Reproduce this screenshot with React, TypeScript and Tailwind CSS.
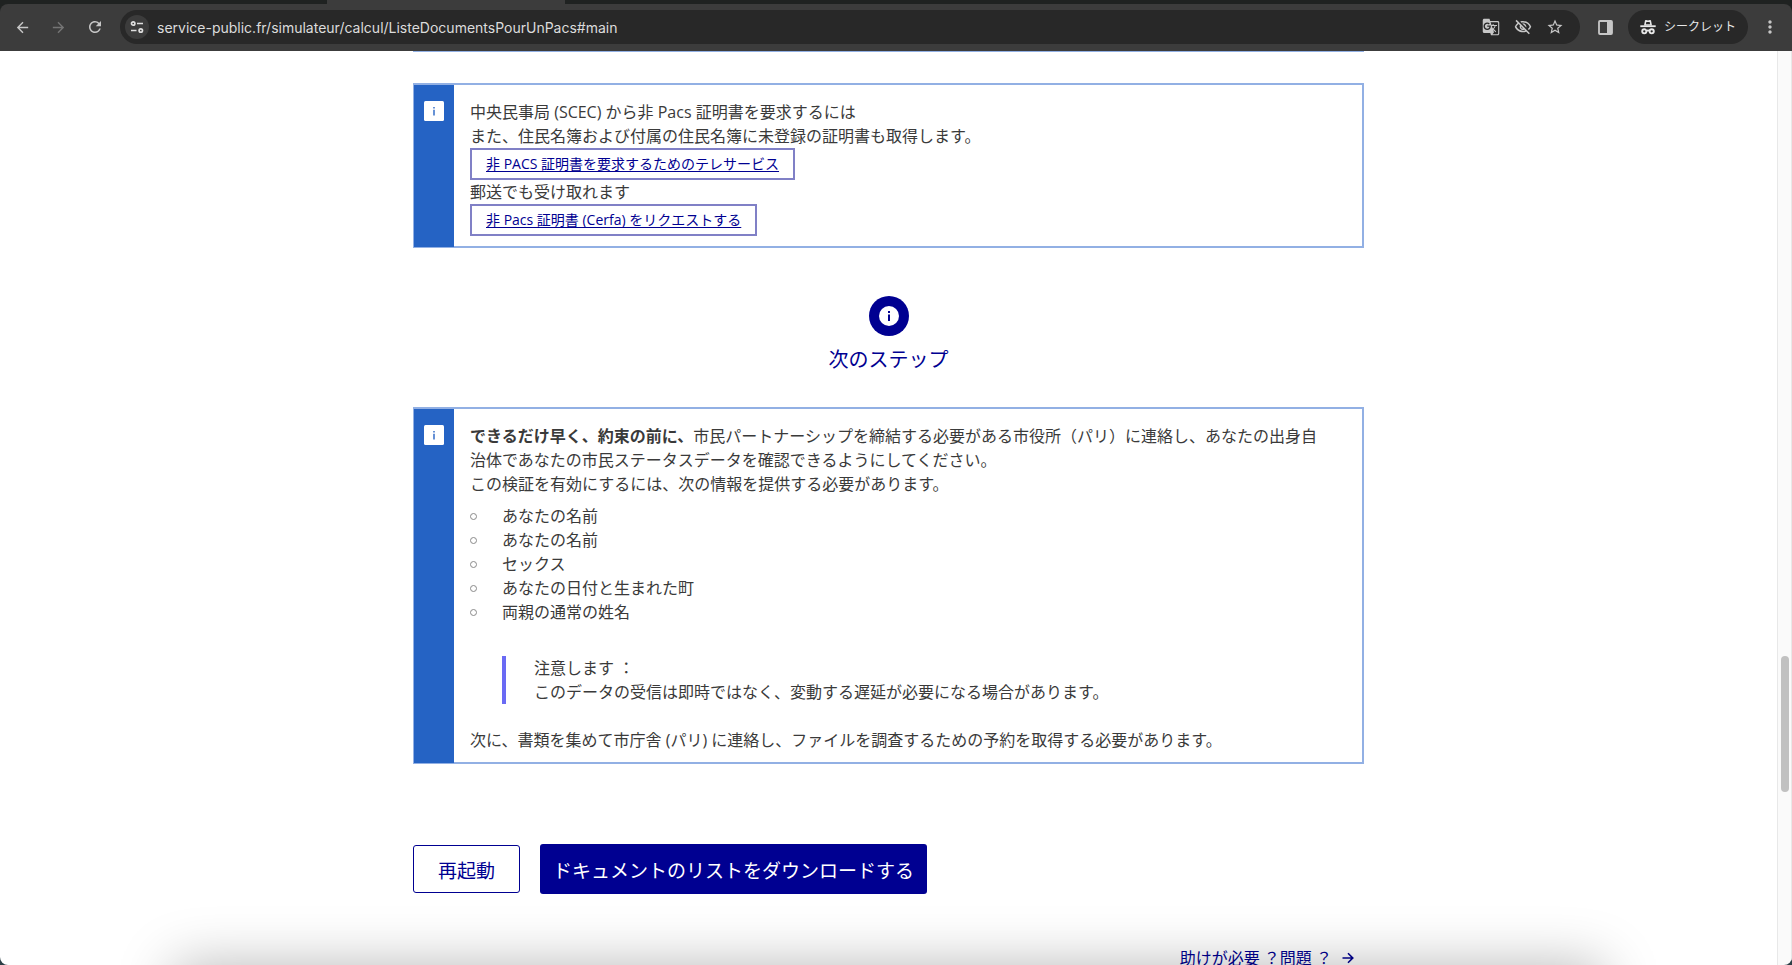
import type { ReactNode } from 'react';
import {
  MdArrowBack,
  MdArrowForward,
  MdRefresh,
  MdGTranslate,
  MdOutlineVisibilityOff,
  MdStarOutline,
  MdMoreVert,
} from 'react-icons/md';

function TuneIcon() {
  return (
    <svg width="14" height="14" viewBox="0 0 14 14" fill="none" stroke="#dedede" strokeWidth="1.7">
      <circle cx="3.2" cy="3.5" r="1.7" />
      <path d="M7 3.5h6M1 10.5h5.5" />
      <circle cx="10.8" cy="10.5" r="1.7" />
    </svg>
  );
}

function PanelIcon() {
  return (
    <svg width="15" height="15" viewBox="0 0 15 15">
      <rect x="1" y="1" width="13" height="13" rx="1" fill="none" stroke="#c7c7c7" strokeWidth="1.8" />
      <rect x="9" y="1" width="5" height="13" fill="#c7c7c7" />
    </svg>
  );
}

function IncognitoIcon() {
  return (
    <svg width="16" height="16" viewBox="0 0 16 16" fill="none" stroke="#e8e8e8">
      <path d="M4 6.5 5 1.6c.1-.6.6-.8 1.1-.6L8 1.5l1.9-.5c.5-.2 1 0 1.1.6L12 6.5z" fill="#e8e8e8" stroke="none" />
      <path d="M6.3 3h3.4l.4 2.3H5.9z" fill="#282828" stroke="none" />
      <path d="M.3 7.2h15.4" strokeWidth="1.8" />
      <circle cx="4.3" cy="12.3" r="2.1" strokeWidth="1.9" />
      <circle cx="11.7" cy="12.3" r="2.1" strokeWidth="1.9" />
      <path d="M6.4 12c1-.7 2.2-.7 3.2 0" strokeWidth="1.6" />
    </svg>
  );
}

function BrowserBar() {
  return (
    <header className="shrink-0 bg-[#1f2221]">
      <div className="flex h-1">
        <div className="w-[327px] rounded-br-md bg-[#1f2221]" />
        <div className="w-[238px] bg-[#3c3c3c]" />
      </div>
      <div className="flex h-[47px] items-center rounded-t-lg bg-[#3c3c3c] pr-3 pb-px pl-3.5">
        <button aria-label="戻る" className="w-9 text-[#c7c7c7]"><MdArrowBack size={17} /></button>
        <button aria-label="進む" className="w-9 text-[#757575]"><MdArrowForward size={17} /></button>
        <button aria-label="再読み込み" className="w-8.5 text-[#c7c7c7]"><MdRefresh size={18} /></button>
        <div className="flex h-[34px] grow items-center rounded-full bg-[#282828] pr-4 pl-[5px]">
          <button aria-label="サイト情報" className="flex size-6 items-center justify-center rounded-full bg-[#3c3c3c]">
            <TuneIcon />
          </button>
          <input
            aria-label="アドレス"
            readOnly
            value="service-public.fr/simulateur/calcul/ListeDocumentsPourUnPacs#main"
            className="ml-2 h-6 min-w-0 grow bg-transparent font-[Inter,'Noto_Sans_CJK_JP',sans-serif] text-sm text-[#dcdcdc] outline-none"
          />
          <div className="flex items-center gap-3.5 text-[#c7c7c7]">
            <button aria-label="翻訳"><MdGTranslate size={18} /></button>
            <button aria-label="追跡防止"><MdOutlineVisibilityOff size={18} /></button>
            <button aria-label="ブックマーク"><MdStarOutline size={18} /></button>
          </div>
        </div>
        <button aria-label="サイドパネル" className="mr-[15px] ml-[18px]"><PanelIcon /></button>
        <button className="flex h-[34px] items-center gap-2 rounded-full bg-[#282828] px-3 text-xs text-[#e8e8e8]">
          <IncognitoIcon />
          シークレット
        </button>
        <button aria-label="メニュー" className="ml-3 text-[#c7c7c7]"><MdMoreVert size={20} /></button>
      </div>
    </header>
  );
}

function InfoCard({ children }: { children: ReactNode }) {
  return (
    <section className="flex border-2 border-l border-[#92b0e4] bg-white">
      <div className="-mb-px flex w-10 shrink-0 justify-center bg-[#2563c4] pt-4">
        <svg width="20" height="20" viewBox="0 0 20 20" aria-hidden="true">
          <rect width="20" height="20" rx="1.5" fill="#fff" />
          <path d="M9.3 6h1.4v1.4H9.3zM9.3 8.700h1.400V14.500H9.300z" fill="#2563c4" />
        </svg>
      </div>
      <div className="grow pt-[15px] pr-8 pb-2.5 pl-4">{children}</div>
    </section>
  );
}

function ServiceLink({ children }: { children: ReactNode }) {
  return (
    <a
      href="#service"
      className="flex h-8 w-fit items-center border-2 border-[#8080c6] px-3.5 text-sm text-[#000091] underline decoration-1 underline-offset-2"
    >
      {children}
    </a>
  );
}

const details = ['あなたの名前', 'あなたの名前', 'セックス', 'あなたの日付と生まれた町', '両親の通常の姓名'];

function Page() {
  return (
    <main className="relative grow overflow-hidden bg-white">
      <div className="mx-auto w-full max-w-[951px] text-base leading-6 text-[#3a3a3a]">
        <div className="h-px bg-[#92b0e4]" />
        <div className="mt-[31px]">
          <InfoCard>
            <p>中央民事局 (SCEC) から非 Pacs 証明書を要求するには</p>
            <p>また、住民名簿および付属の住民名簿に未登録の証明書も取得します。</p>
            <ServiceLink>非 PACS 証明書を要求するためのテレサービス</ServiceLink>
            <p>郵送でも受け取れます</p>
            <ServiceLink>非 Pacs 証明書 (Cerfa) をリクエストする</ServiceLink>
          </InfoCard>
        </div>

        <div className="mt-12 flex flex-col items-center gap-2.5">
          <svg width="40" height="40" viewBox="0 0 40 40" aria-hidden="true">
            <circle cx="20" cy="20" r="20" fill="#000091" />
            <circle cx="20" cy="20" r="10" fill="#fff" />
            <path d="M19 15h2v2h-2zM19 18.500h2V25h-2z" fill="#000091" />
          </svg>
          <h2 className="text-xl leading-7 text-[#000091]">次のステップ</h2>
        </div>

        <div className="mt-[33px]">
          <InfoCard>
            <p>
              <strong className="font-bold">できるだけ早く、約束の前に、</strong>
              市民パートナーシップを締結する必要がある市役所（パリ）に連絡し、あなたの出身自治体であなたの市民ステータスデータを確認できるようにしてください。
            </p>
            <p>この検証を有効にするには、次の情報を提供する必要があります。</p>
            <ul className="mt-2">
              {details.map((text, i) => (
                <li key={i} className="flex items-center">
                  <span className="mr-[25px] size-[7px] rounded-full border border-[#8a8a8a]" />
                  {text}
                </li>
              ))}
            </ul>
            <div className="mt-8 mb-6 ml-8 border-l-4 border-[#6a6af4] pl-7">
              <p>注意します ：</p>
              <p>このデータの受信は即時ではなく、変動する遅延が必要になる場合があります。</p>
            </div>
            <p>次に、書類を集めて市庁舎 (パリ) に連絡し、ファイルを調査するための予約を取得する必要があります。</p>
          </InfoCard>
        </div>

        <div className="mt-20 flex items-center gap-5 text-[19px]">
          <button className="h-12 rounded-[3px] border border-[#000091] px-6 pt-1 text-[#000091]">再起動</button>
          <button className="h-[50px] rounded-[3px] bg-[#000091] px-[13px] pt-1 text-white">
            ドキュメントのリストをダウンロードする
          </button>
        </div>

        <div className="mt-[52px] flex justify-end pr-2.5">
          <a href="#help" className="flex items-center gap-2.5 text-[#000091]">
            助けが必要 ？問題 ？
            <svg width="12" height="12" viewBox="0 0 12 12" fill="none" stroke="#000091" strokeWidth="1.6" aria-hidden="true">
              <path d="M.5 6h10M6 1.200 10.800 6 6 10.800" />
            </svg>
          </a>
        </div>
      </div>

      <div className="pointer-events-none absolute inset-x-[174px] top-full h-20 shadow-[0_0_56px_rgba(0,0,0,0.28)]" />
    </main>
  );
}

export default function App() {
  return (
    <div className="flex h-screen flex-col overflow-hidden bg-[#2c3f46] font-['Open_Sans','Noto_Sans_CJK_JP',sans-serif]">
      <BrowserBar />
      <div className="flex min-h-0 grow overflow-hidden rounded-b-lg">
        <Page />
        <div className="w-[15px] shrink-0 border-x border-[#e8e8e8] bg-[#fafafa] px-[3px] pt-[605px]">
          <div className="h-[136px] w-2 rounded-full bg-[#c1c1c1]" />
        </div>
      </div>
    </div>
  );
}
